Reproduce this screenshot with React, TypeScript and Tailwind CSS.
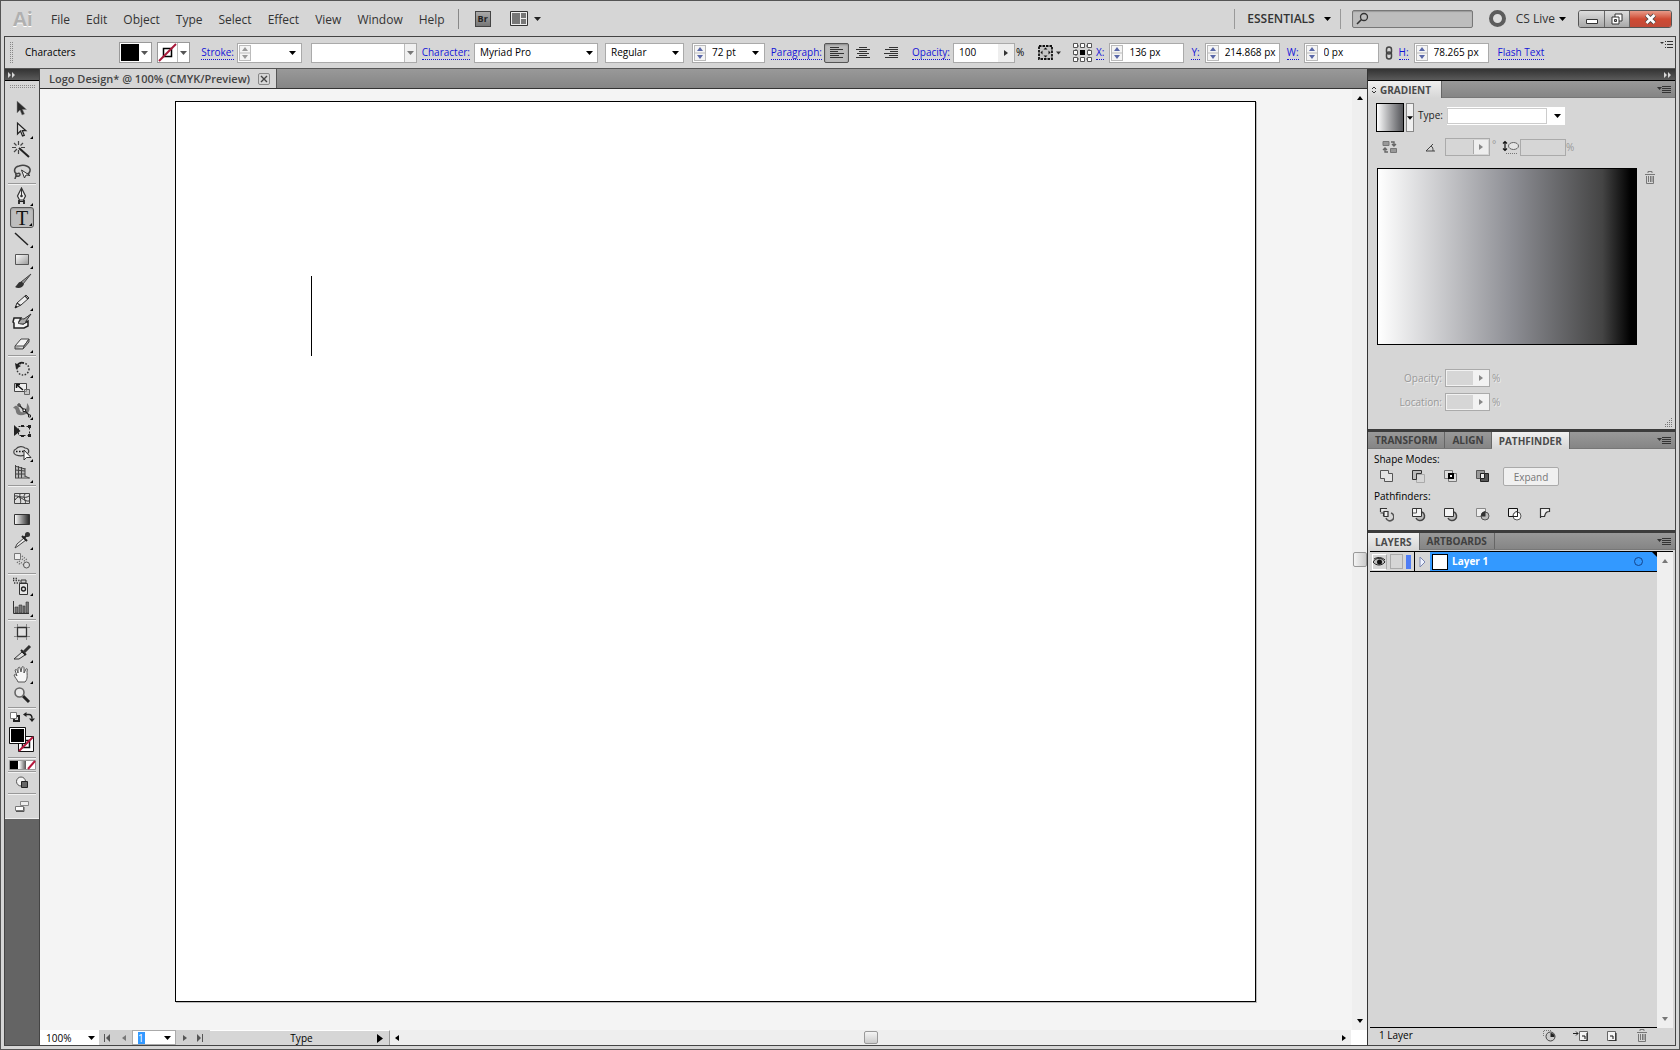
import type { ReactNode } from 'react'

const MENUS = ['File', 'Edit', 'Object', 'Type', 'Select', 'Effect', 'View', 'Window', 'Help']

type Tool = { name: string; icon: ReactNode; flyout?: boolean; active?: boolean }

function Svg({ w = 22, h = 20, children }: { w?: number; h?: number; children: ReactNode }) {
  return (
    <svg width={w} height={h} viewBox={`0 0 ${w} ${h}`} fill="none" className="shrink-0" aria-hidden="true">
      {children}
    </svg>
  )
}

const TOOL_GROUPS: Tool[][] = [
  [
    {
      name: 'Selection',
      icon: <Svg><path d="M6 2v12l3-3 2 5 2.500-1-2-4.500h4z" fill="#2b2b2b" stroke="#888" strokeWidth=".5" /></Svg>,
    },
    {
      name: 'Direct Selection',
      flyout: true,
      icon: <Svg><path d="M6.500 3v11l3-3 2 5 1.800-.7-2-4.600h3.600z" fill="#ddd" stroke="#222" strokeWidth="1.200" /></Svg>,
    },
    {
      name: 'Magic Wand',
      icon: (
        <Svg>
          <path d="M8 7l10 9" stroke="#222" strokeWidth="2" />
          <path d="M7.500 0v4M7.500 9v4M1 6.500h4M10 6.500h4M3 2l2.500 2.500M12 2L9.500 4.500M3 11l3-3" stroke="#444" strokeWidth="1.200" />
        </Svg>
      ),
    },
    {
      name: 'Lasso',
      icon: (
        <Svg>
          <path d="M6 12C2 10 3 5 8 4c6-2 12 1 11 5-.5 2-2 3-3 3M6 12c3-2 4 1 2 2s-4-1-3-3M5 13c0 2-1 3-1 4" stroke="#444" strokeWidth="1.500" />
          <path d="M10.500 8l3 8 1.500-3 4 .5z" fill="#eee" stroke="#333" />
        </Svg>
      ),
    },
  ],
  [
    {
      name: 'Pen',
      flyout: true,
      icon: (
        <Svg>
          <path d="M10.500 1l-4 8 2 4h4l2-4z" fill="#eee" stroke="#333" strokeWidth="1.200" />
          <path d="M10.500 2v6" stroke="#333" />
          <path d="M8 13v4M13 13v4" stroke="#222" strokeWidth="1.800" />
          <path d="M8 14.500h5" stroke="#222" />
          <circle cx="10.500" cy="9" r="1.300" fill="#333" />
        </Svg>
      ),
    },
    { name: 'Type', flyout: true, active: true, icon: <span className="font-['Liberation_Serif',serif] text-[20px] leading-5 text-[#111]">T</span> },
    { name: 'Line Segment', flyout: true, icon: <Svg><path d="M4 4l13 12" stroke="#222" strokeWidth="1.500" /></Svg> },
    {
      name: 'Rectangle',
      flyout: true,
      icon: (
        <Svg>
          <defs>
            <linearGradient id="rect" x1="0" y1="0" x2="1" y2="1">
              <stop stopColor="#fff" />
              <stop offset="1" stopColor="#999" />
            </linearGradient>
          </defs>
          <path d="M4.500 4.500h13v10h-13z" fill="url(#rect)" stroke="#555" />
        </Svg>
      ),
    },
    {
      name: 'Paintbrush',
      icon: (
        <Svg>
          <path d="M20 3L10 11l2 2z" fill="#999" stroke="#444" />
          <path d="M11 11c-4-1-4 3-7 5 3 2 8 1 9-3z" fill="#333" />
        </Svg>
      ),
    },
    {
      name: 'Pencil',
      flyout: true,
      icon: (
        <Svg>
          <path d="M15 3l3 3-8 7-6 3 2-5z" fill="#eee" stroke="#333" />
          <path d="M6 11l3.500 2.500M14 4l3 3" stroke="#333" strokeWidth="1.200" />
          <path d="M4 16l2.500-1L5 13.500z" fill="#111" />
        </Svg>
      ),
    },
    {
      name: 'Blob Brush',
      icon: (
        <Svg>
          <path d="M3 5h7L8 9l4 2 5-3v5l-4 2H3v-5L2 9z" fill="#f4f4f4" stroke="#222" strokeWidth="1.500" />
          <path d="M20 1l-7 5c-4-1-4 3-6 4 4 2 8 1 8-2z" fill="#aaa" stroke="#333" />
        </Svg>
      ),
    },
    {
      name: 'Eraser',
      flyout: true,
      icon: (
        <Svg>
          <path d="M4 12l6-7h8l-5 7z" fill="#f2f2f2" stroke="#444" />
          <path d="M4 12v3h8l1-3 5-7v3l-6 7" fill="#aaa" stroke="#444" />
        </Svg>
      ),
    },
  ],
  [
    {
      name: 'Rotate',
      flyout: true,
      icon: (
        <Svg>
          <circle cx="12" cy="10" r="6" stroke="#333" strokeWidth="1.500" strokeDasharray="1.500 1.500" />
          <path d="M6 7a6 6 0 017-3" stroke="#222" strokeWidth="1.600" />
          <path d="M4 4l1 6 5-3z" fill="#222" />
        </Svg>
      ),
    },
    {
      name: 'Scale',
      flyout: true,
      icon: (
        <Svg>
          <path d="M3.500 3.500h12v8h-12z" fill="#eee" stroke="#444" />
          <path d="M13.500 9.500h5v5h-5z" fill="#bbb" fillOpacity=".6" stroke="#666" />
          <path d="M12 10L6 5M5.500 8V4.500H9" stroke="#111" strokeWidth="1.500" />
        </Svg>
      ),
    },
    {
      name: 'Width',
      flyout: true,
      icon: (
        <Svg>
          <path d="M2 7c3-4 5-2 6 0s1 5 4 4 4-4 4-9c4 5 3 9-1 11s-9 2-10-2c0-2-1-4-3-4z" fill="#777" />
          <path d="M8 4l11 11" stroke="#222" strokeWidth="1.300" />
          <path d="M7 3h2v2H7zM12 8h2.500v2.500H12zM17.500 14h2v2h-2z" fill="#fff" stroke="#222" />
        </Svg>
      ),
    },
    {
      name: 'Free Transform',
      icon: (
        <Svg>
          <path d="M7.500 4.500h11v9h-11z" stroke="#222" strokeDasharray="2 2" />
          <path d="M3 3v11l6.500-5z" fill="#222" />
          <path d="M17 3h3v3h-3zM17 12h3v3h-3zM10 3h3v2h-3zM10 13h3v2h-3z" fill="#222" />
        </Svg>
      ),
    },
    {
      name: 'Shape Builder',
      flyout: true,
      icon: (
        <Svg>
          <path d="M5 12c-3-1-3-5 0-6 2-3 7-3 9-1 4 0 5 4 2 6-3 2-8 2-11 1z" fill="#d8d8d8" stroke="#444" strokeWidth="1.200" />
          <path d="M5 8.500h8" stroke="#111" strokeWidth="1.500" strokeDasharray="1.500 1.500" />
          <path d="M13 7v10l2.500-2.500H20z" fill="#fff" stroke="#333" />
        </Svg>
      ),
    },
    {
      name: 'Perspective Grid',
      flyout: true,
      icon: (
        <Svg>
          <path d="M4 2l10 3v8H4z" fill="#bbb" />
          <path d="M4.500 1v13M7.500 2v12M10.500 3v11M14 4v9M4 2l10 3M4 6l10 1M4 10h10M4 14h15M14 12l4 2" stroke="#444" />
        </Svg>
      ),
    },
  ],
  [
    {
      name: 'Mesh',
      icon: (
        <Svg>
          <path d="M3.500 4.500h15v10h-15z" fill="#ddd" stroke="#444" />
          <path d="M9 5c-1 4 2 6 0 10M14 5c-3 4 2 6 0 10M4 11c4-7 9 0 14-4M4 7c5-1 9 6 14 5" stroke="#333" />
        </Svg>
      ),
    },
    {
      name: 'Gradient',
      icon: (
        <Svg>
          <defs>
            <linearGradient id="ramp">
              <stop stopColor="#fff" />
              <stop offset="1" stopColor="#222" />
            </linearGradient>
          </defs>
          <path d="M3.500 4.500h15v10h-15z" fill="url(#ramp)" stroke="#333" />
        </Svg>
      ),
    },
    {
      name: 'Eyedropper',
      flyout: true,
      icon: (
        <Svg>
          <path d="M13 7l-7 6-2 4 3-2 8-6" fill="#eee" stroke="#444" />
          <path d="M11 5l5 5M13 7l4-4" stroke="#222" strokeWidth="2" />
          <circle cx="16.500" cy="3.500" r="2.500" fill="#333" />
        </Svg>
      ),
    },
    {
      name: 'Blend',
      icon: (
        <Svg>
          <path d="M3.500 1.500h6v6h-6z" fill="#eee" stroke="#777" />
          <path d="M6 10l4 3M8 9l5 4M11 7l4 3M11 4l5 4" stroke="#666" strokeWidth="1.500" strokeDasharray="1 1.500" />
          <circle cx="15.500" cy="13" r="3" fill="#ddd" stroke="#555" />
        </Svg>
      ),
    },
  ],
  [
    {
      name: 'Symbol Sprayer',
      flyout: true,
      icon: (
        <Svg>
          <path d="M2 3.500h7M3 6h6M2 1.500h5" stroke="#333" strokeWidth="1.300" strokeDasharray="1.300 1.300" />
          <path d="M10 3h5v3h-5z" fill="#ccc" stroke="#333" />
          <path d="M8.500 6.500h8v11h-8z" fill="#e6e6e6" stroke="#333" />
          <circle cx="12.500" cy="12" r="2" stroke="#222" strokeWidth="1.300" />
        </Svg>
      ),
    },
    {
      name: 'Column Graph',
      flyout: true,
      icon: (
        <Svg>
          <path d="M2.500 3v12.500H18" stroke="#333" />
          <path d="M4 9h3v6H4zM8 7h3v8H8zM12 8h2v7h-2zM15 4h2.500v11H15z" fill="#777" stroke="#333" strokeWidth=".6" />
        </Svg>
      ),
    },
  ],
  [
    {
      name: 'Artboard',
      icon: (
        <Svg>
          <path d="M6.500 4.500h9v9h-9z" fill="#e2e2e2" stroke="#333" strokeWidth="1.300" />
          <path d="M6.500 1v3M15.500 1v3M6.500 14v3M15.500 14v3M3 4.500h3M16 4.500h3M3 13.500h3M16 13.500h3" stroke="#888" />
        </Svg>
      ),
    },
    {
      name: 'Slice',
      flyout: true,
      icon: (
        <Svg>
          <path d="M11 8l-8 7h5l6-4z" fill="#ddd" stroke="#333" />
          <path d="M10 6l5 5" stroke="#222" strokeWidth="2" />
          <path d="M13 8l6-6" stroke="#333" strokeWidth="3" />
        </Svg>
      ),
    },
    {
      name: 'Hand',
      flyout: true,
      icon: (
        <Svg>
          <path
            d="M7 17c-1-3-3-4-4-7 1-1 2 0 3 1L4 5c1-1 2-1 3 3V3c1-1 2-1 2 0l1 4 1-5c1-1 2 0 2 1v5l2-4c1-1 2 0 1 2 0 4 1 8-2 11z"
            fill="#f6f6f6"
            stroke="#555"
          />
        </Svg>
      ),
    },
    {
      name: 'Zoom',
      icon: (
        <Svg>
          <path d="M12 10l6 6" stroke="#222" strokeWidth="3" />
          <circle cx="8.500" cy="6.500" r="4.500" fill="#e8e8e8" stroke="#666" strokeWidth="1.600" />
        </Svg>
      ),
    },
  ],
]

function Caret({ className = 'text-black' }: { className?: string }) {
  return (
    <svg width="7" height="4" viewBox="0 0 7 4" className={`shrink-0 ${className}`} aria-hidden="true">
      <path d="M0 0h7L3.500 4z" fill="currentColor" />
    </svg>
  )
}

function Arrow({ d, className = 'text-black' }: { d: 'up' | 'down' | 'left' | 'right'; className?: string }) {
  const path = { up: 'M4 2l3 4H1z', down: 'M1 2h6L4 6z', left: 'M6 1v6L2 4z', right: 'M2 1v6l4-3z' }[d]
  return (
    <svg width="8" height="8" viewBox="0 0 8 8" className={`shrink-0 ${className}`} aria-hidden="true">
      <path d={path} fill="currentColor" />
    </svg>
  )
}

function Chevrons() {
  return (
    <svg width="8" height="6" viewBox="0 0 8 6" aria-hidden="true">
      <path d="M0 0v6l3-3zM4 0v6l3-3z" fill="#d6d6d6" />
    </svg>
  )
}

function PanelMenu() {
  return (
    <button aria-label="Panel menu" className="mr-1 ml-auto flex items-center">
      <Svg w={14} h={9}>
        <path d="M0 2h5L2.500 5z" fill="#333" />
        <path d="M5 1.500h9M5 3.500h9M5 5.500h9M5 7.500h9" stroke="#333" />
      </Svg>
    </button>
  )
}

function Spinner({ muted }: { muted?: boolean }) {
  return (
    <span className={`m-px flex w-3 shrink-0 items-center justify-center border border-[#bbb] bg-[#f4f4f4] ${muted ? 'text-[#999]' : 'text-[#5a68a8]'}`}>
      <Svg w={10} h={14}>
        <path d="M5 1l3 4H2zM5 13l3-4H2z" fill="currentColor" />
        <path d="M0 7h10" stroke="#bbb" />
      </Svg>
    </span>
  )
}

function Link({ children }: { children: ReactNode }) {
  return (
    <a href="#" className="shrink-0 border-b border-dotted border-[#1414d8] leading-[14px] text-[#1414d8]">
      {children}
    </a>
  )
}

function NumberBox({ label, value }: { label: string; value: string }) {
  return (
    <>
      <Link>{label}:</Link>
      <span className="ml-[5px] flex h-5 w-[75px] shrink-0 border border-[#aaa] bg-white">
        <Spinner />
        <input aria-label={label} defaultValue={value} className="w-full min-w-0 bg-transparent pl-[5px] outline-none" />
      </span>
    </>
  )
}

function Picker({ label, value, className }: { label: string; value: string; className: string }) {
  return (
    <span className={`relative flex h-5 shrink-0 items-center border border-[#aaa] bg-white ${className}`}>
      <select aria-label={label} className="h-full w-full appearance-none bg-transparent pl-[5px] outline-none">
        <option>{value}</option>
      </select>
      <span className="pointer-events-none absolute right-1">
        <Caret />
      </span>
    </span>
  )
}

function AlignIcon({ side }: { side: 'left' | 'center' | 'right' }) {
  const d = {
    left: 'M0 .5h9M0 2.500h13M0 4.500h8M0 6.500h14M0 8.500h9M0 10.500h13',
    center: 'M3 .5h8M0 2.500h14M3 4.500h8M1 6.500h12M3 8.500h8M0 10.500h14',
    right: 'M5 .5h9M1 2.500h13M6 4.500h8M0 6.500h14M5 8.500h9M1 10.500h13',
  }[side]
  return (
    <Svg w={14} h={11}>
      <path d={d} stroke="#333" />
    </Svg>
  )
}

function MenuBar() {
  return (
    <header className="flex h-[35px] shrink-0 items-center pr-1 pl-[9px] text-[12px] text-[#333]">
      <span className="w-[38px] text-[20px] leading-6 font-bold text-[#b0b0b0] [text-shadow:0_1px_0_#fff]">Ai</span>
      <nav className="flex gap-4 pt-[2px]">
        {MENUS.map((m) => (
          <button key={m}>{m}</button>
        ))}
      </nav>
      <span className="mr-4 ml-[13px] h-5 w-px bg-[#888]" />
      <button className="h-4 w-4 border border-[#444] bg-linear-to-b from-[#aaa] to-[#777] text-[9px] leading-[13px] font-bold text-[#222]">Br</button>
      <button aria-label="Arrange documents" className="ml-[19px] flex items-center gap-[6px]">
        <Svg w={18} h={15}>
          <path d="M.5.5h17v14H.5z" fill="#eee" stroke="#333" />
          <path d="M2 2h8v11H2zM11 2h5v5h-5zM11 8h5v5h-5z" fill="#777" />
        </Svg>
        <Caret className="text-[#222]" />
      </button>
      <div className="ml-auto flex items-center">
        <span className="h-5 w-px bg-[#999]" />
        <button className="ml-3 flex items-center gap-[9px] text-[12px] font-semibold">
          ESSENTIALS <Caret />
        </button>
        <span className="mr-[11px] ml-[9px] h-5 w-px bg-[#999]" />
        <label className="flex h-[18px] w-[121px] items-center rounded-xs border border-[#777] bg-[#bdbdbd] pl-[3px] shadow-[inset_0_1px_1px_#999]">
          <Svg w={13} h={13}>
            <circle cx="8" cy="5" r="3.500" stroke="#333" strokeWidth="1.300" />
            <path d="M5.500 7.500L1 12" stroke="#333" strokeWidth="1.600" />
          </Svg>
          <input aria-label="Search" className="w-full min-w-0 bg-transparent outline-none" />
        </label>
        <span className="mr-[10px] ml-4 h-[17px] w-[17px] rounded-full border-4 border-[#5c5c5c] bg-[#ddd]" />
        <button className="mr-3 flex items-center gap-1">
          CS Live <Caret />
        </button>
        <div className="flex h-[18px] overflow-hidden rounded-[3px] border border-[#555]">
          <button aria-label="Minimize" className="flex w-[25px] items-center justify-center bg-linear-to-b from-[#ddd] to-[#a8a8a8]">
            <Svg w={12} h={12}><path d="M.5 6.500h11v4H.5z" fill="#fff" stroke="#333" /></Svg>
          </button>
          <button aria-label="Restore" className="flex w-[25px] items-center justify-center border-l border-[#666] bg-linear-to-b from-[#ddd] to-[#a8a8a8]">
            <Svg w={12} h={12}>
              <path d="M4 1h7v7H4z" fill="#fff" stroke="#333" />
              <path d="M1 4h7v7H1z" fill="#fff" stroke="#333" />
              <path d="M3.500 6.500h2v2h-2z" fill="#aaa" stroke="#333" />
            </Svg>
          </button>
          <button aria-label="Close" className="flex w-[42px] items-center justify-center border-l border-[#666] bg-linear-to-b from-[#e79a88] via-[#cf4a33] to-[#c04a38]">
            <Svg w={13} h={12}>
              <path d="M2.500 2l8 8M10.500 2l-8 8" stroke="#444" strokeWidth="4.500" />
              <path d="M2.500 2l8 8M10.500 2l-8 8" stroke="#fff" strokeWidth="2.800" />
            </Svg>
          </button>
        </div>
      </div>
    </header>
  )
}

function ControlBar() {
  return (
    <div className="flex h-8 shrink-0 items-center border-b border-[#555] pl-[5px] text-[10px] whitespace-nowrap text-black">
      <Svg w={3} h={21}><path d="M.5 0v21M2.500 0v21" stroke="#888" strokeDasharray="1 1" /></Svg>
      <span className="ml-3 w-[94px]">Characters</span>
      <button aria-label="Fill" className="flex h-[21px] w-[33px] border border-[#999] bg-white p-px">
        <span className="h-full w-[18px] bg-black" />
        <span className="flex flex-1 items-center justify-center"><Caret className="text-[#555]" /></span>
      </button>
      <button aria-label="Stroke color" className="ml-[5px] flex h-[21px] w-[33px] border border-[#999] bg-white">
        <Svg w={19} h={19}>
          <path d="M5.500 5.500h8v8h-8z" stroke="#000" strokeWidth="1.500" />
          <path d="M1 18L18 1" stroke="#a8193a" strokeWidth="2" />
        </Svg>
        <span className="flex h-full flex-1 items-center justify-center border-l border-[#bbb]"><Caret className="text-[#555]" /></span>
      </button>
      <span className="flex w-[47px] justify-end pr-[3px]"><Link>Stroke:</Link></span>
      <span className="flex h-5 w-[65px] border border-[#aaa] bg-white">
        <Spinner muted />
        <input aria-label="Stroke" className="w-full min-w-0 bg-transparent outline-none" />
        <span className="flex w-3 shrink-0 items-center pr-1"><Caret /></span>
      </span>
      <span className="ml-[9px] flex h-5 w-[106px] border border-[#aaa] bg-white">
        <input aria-label="Brush" className="w-full min-w-0 bg-transparent outline-none" />
        <span className="flex w-3 shrink-0 items-center justify-center border-l border-[#bbb] bg-[#f0f0f0]"><Caret className="text-[#777]" /></span>
      </span>
      <span className="flex w-[57px] justify-end pr-1"><Link>Character:</Link></span>
      <Picker label="Font family" value="Myriad Pro" className="w-[124px]" />
      <Picker label="Font style" value="Regular" className="ml-[7px] w-[79px]" />
      <span className="ml-2 flex h-5 w-[73px] border border-[#aaa] bg-white">
        <Spinner />
        <input aria-label="Font size" defaultValue="72 pt" className="w-full min-w-0 bg-transparent pl-[5px] outline-none" />
        <span className="flex w-3 shrink-0 items-center pr-1"><Caret /></span>
      </span>
      <span className="flex w-[59px] justify-end pr-[2px]"><Link>Paragraph:</Link></span>
      <button aria-label="Align left" className="flex h-5 w-[25px] items-center justify-center rounded-xs border border-[#555] bg-[#bcbcbc] shadow-[inset_0_1px_2px_#888]"><AlignIcon side="left" /></button>
      <button aria-label="Align center" className="flex w-7 justify-center"><AlignIcon side="center" /></button>
      <button aria-label="Align right" className="flex w-7 justify-center"><AlignIcon side="right" /></button>
      <span className="flex w-12 justify-end pr-[3px]"><Link>Opacity:</Link></span>
      <span className="flex h-5 w-[62px] border border-[#aaa] bg-white">
        <input aria-label="Opacity" defaultValue="100" className="w-full min-w-0 bg-transparent pl-[5px] outline-none" />
        <span className="flex w-4 shrink-0 items-center justify-center bg-[#eee]"><Arrow d="right" className="text-[#333]" /></span>
      </span>
      <span className="w-[23px] pl-px">%</span>
      <button aria-label="Recolor" className="flex items-center gap-[3px]">
        <Svg w={15} h={15}>
          <path d="M1 1h13v13H1z" fill="#c4c4c4" stroke="#111" strokeWidth="1.800" strokeDasharray="2.500 1" />
          <path d="M7.500 2.500l2 2h-4zM7.500 12.500l2-2h-4zM2.500 7.500l2-2v4zM12.500 7.500l-2-2v4z" fill="#111" />
        </Svg>
        <Caret className="w-[5px] text-[#333]" />
      </button>
      <button aria-label="Reference point" className="mr-1 ml-3">
        <Svg w={19} h={19}>
          <path d="M3 3h13v13H3z" stroke="#555" strokeDasharray="1 1" />
          <path d="M.5.5h4v4h-4zM7.500.5h4v4h-4zM14.500.5h4v4h-4zM.5 7.500h4v4h-4zM14.500 7.500h4v4h-4zM.5 14.500h4v4h-4zM7.500 14.500h4v4h-4zM14.500 14.500h4v4h-4z" fill="#fff" stroke="#555" />
          <path d="M7 7h5v5H7z" fill="#000" />
        </Svg>
      </button>
      <NumberBox label="X" value="136 px" />
      <span className="w-[7px]" />
      <NumberBox label="Y" value="214.868 px" />
      <span className="w-[7px]" />
      <NumberBox label="W" value="0 px" />
      <button aria-label="Constrain proportions" className="mx-[6px]">
        <Svg w={8} h={14}>
          <rect x="1.500" y="1" width="5" height="7" rx="2.500" stroke="#444" strokeWidth="1.500" />
          <rect x="1.500" y="6" width="5" height="7" rx="2.500" stroke="#444" strokeWidth="1.500" />
        </Svg>
      </button>
      <NumberBox label="H" value="78.265 px" />
      <span className="w-[9px]" />
      <Link>Flash Text</Link>
      <button aria-label="Control menu" className="mr-[2px] mb-4 ml-auto">
        <Svg w={13} h={9}>
          <path d="M0 2h4L2 4z" fill="#333" />
          <path d="M5 1.500h1M7 1.500h6M5 4.500h1M7 4.500h6M5 7.500h1M7 7.500h6" stroke="#333" />
        </Svg>
      </button>
    </div>
  )
}

function ToolSeparator() {
  return (
    <div className="flex h-1 items-center px-[3px]">
      <span className="h-[2px] w-full border-t border-[#999] bg-[#f2f2f2]" />
    </div>
  )
}

function Toolbar() {
  return (
    <aside className="w-[35px] shrink-0 border-r border-[#444] bg-[#646464]">
      <div className="flex h-3 items-center border-b border-black bg-linear-to-b from-[#333] to-[#5a5a5a] pl-[3px]"><Chevrons /></div>
      <div className="border-b border-[#eee] bg-[#d6d6d6]">
        <div className="flex h-[17px] justify-center pt-1">
          <Svg w={25} h={3}><path d="M0 .5h25M0 2.500h25" stroke="#888" strokeDasharray="1 1" /></Svg>
        </div>
        {TOOL_GROUPS.map((group, i) => (
          <div key={i}>
            {group.map((tool) => (
              <button
                key={tool.name}
                aria-label={tool.name}
                className={`relative mx-auto flex h-[21px] w-6 items-center justify-center ${tool.active ? 'rounded-[3px] border border-[#555] bg-[#bebebe] shadow-[inset_0_1px_2px_#999]' : ''}`}
              >
                {tool.icon}
                {tool.flyout && (
                  <svg width="3" height="3" viewBox="0 0 3 3" className="absolute right-px bottom-px" aria-hidden="true">
                    <path d="M3 0v3H0z" fill="#000" />
                  </svg>
                )}
              </button>
            ))}
            <ToolSeparator />
          </div>
        ))}
        <div className="flex h-[14px] items-center justify-between px-1">
          <Svg w={12} h={12}>
            <path d="M5 5h5v5H5z" stroke="#222" strokeWidth="2" />
            <path d="M1.500 1.500h6v6h-6z" fill="#fff" stroke="#777" />
          </Svg>
          <Svg w={12} h={12}>
            <path d="M2 3.500h4c2 0 3 1 3 4" stroke="#222" strokeWidth="1.500" />
            <path d="M0 3.500L3.500 1v5zM6 7.500h6l-3 3.500z" fill="#222" />
          </Svg>
        </div>
        <div className="flex justify-center pt-[3px]">
          <Svg w={26} h={26}>
            <path d="M9.500 9.500h15v15h-15z" fill="#fff" stroke="#111" />
            <path d="M13.500 13.500h7v7h-7z" stroke="#111" strokeWidth="1.500" />
            <path d="M10 24L24 10" stroke="#b5173c" strokeWidth="2" />
            <path d="M.5.5h16v16H.5z" fill="#fff" stroke="#111" />
            <path d="M2 2h13v13H2z" fill="#000" />
          </Svg>
        </div>
        <div className="pt-[3px]"><ToolSeparator /></div>
        <div className="flex justify-center">
          <Svg w={27} h={10}>
            <defs>
              <linearGradient id="mini">
                <stop stopColor="#fff" />
                <stop offset="1" stopColor="#555" />
              </linearGradient>
            </defs>
            <path d="M.5.5h26v9H.5z" fill="#fff" stroke="#999" />
            <path d="M1 1h8v8H1z" fill="#000" />
            <path d="M10 1h7v8h-7z" fill="url(#mini)" />
            <path d="M19 9l7-8" stroke="#b5173c" strokeWidth="2" />
          </Svg>
        </div>
        <ToolSeparator />
        <button aria-label="Drawing mode" className="mx-auto flex h-[18px] items-center">
          <Svg w={14} h={14}>
            <circle cx="6" cy="5.500" r="4.500" fill="#f4f4f4" stroke="#555" />
            <path d="M6.500 5.500h6v6h-6z" fill="#666" stroke="#222" />
          </Svg>
        </button>
        <ToolSeparator />
        <button aria-label="Screen mode" className="mx-auto flex h-[22px] items-center">
          <Svg w={18} h={14}>
            <path d="M7.500 1.500h8v4h-8z" fill="#eee" stroke="#888" />
            <path d="M2.500 6.500h8v4h-8z" fill="#fff" stroke="#777" />
            <path d="M3 11.500h8V7" stroke="#555" />
          </Svg>
        </button>
      </div>
    </aside>
  )
}

function StatusBar() {
  return (
    <div className="flex h-[15px] shrink-0 items-center bg-[#d0d0d0] text-[10px] leading-[14px] text-black">
      <span className="relative flex h-full w-[59px] items-center bg-white">
        <select aria-label="Zoom level" className="h-full w-full appearance-none bg-transparent pl-[6px] outline-none"><option>100%</option></select>
        <span className="pointer-events-none absolute right-1"><Caret /></span>
      </span>
      <button aria-label="First artboard" className="flex w-4 items-center justify-center">
        <Svg w={8} h={8}><path d="M1 0h1v8H1zM7 0v8L3 4z" fill="#555" /></Svg>
      </button>
      <button aria-label="Previous artboard" className="flex w-[17px] justify-center"><Arrow d="left" className="text-[#777]" /></button>
      <span className="relative flex h-full w-11 items-center border border-[#aaa] bg-white pl-[5px]">
        <input aria-label="Artboard number" defaultValue="1" className="h-3 w-[7px] bg-[#3399ff] leading-3 text-white outline-none" />
        <span className="absolute right-1"><Caret /></span>
      </span>
      <button aria-label="Next artboard" className="flex w-[18px] justify-center"><Arrow d="right" className="text-[#555]" /></button>
      <button aria-label="Last artboard" className="mr-1 flex w-3 justify-center">
        <Svg w={8} h={8}><path d="M1 0v8l4-4zM6 0h1v8H6z" fill="#555" /></Svg>
      </button>
      <button className="flex h-full w-[180px] items-center border-t border-r border-white border-r-[#999] bg-[#d6d6d6]">
        <span className="flex-1 pl-1 text-center">Type</span>
        <svg width="6" height="9" viewBox="0 0 6 9" className="-ml-3 mr-[6px]" aria-hidden="true"><path d="M0 0v9l6-4.500z" fill="#000" /></svg>
      </button>
      <div className="flex h-full flex-1 items-center justify-between bg-[#eee] px-[3px]">
        <Arrow d="left" />
        <span className="h-[13px] w-[14px] rounded-xs border border-[#999] bg-linear-to-b from-[#f4f4f4] to-[#ccc]" />
        <Arrow d="right" />
      </div>
      <span className="h-full w-4 bg-white" />
    </div>
  )
}

function DocumentArea() {
  return (
    <main className="flex min-w-0 flex-1 flex-col border-r border-[#333]">
      <div className="flex h-5 shrink-0 items-stretch border-b border-[#333] bg-linear-to-b from-[#999] to-[#858585]">
        <div className="flex items-center gap-2 border-r border-[#555] bg-[#d6d6d6] pt-px pr-[6px] pl-[9px] text-[11px] font-semibold text-[#444]">
          <span>Logo Design* @ 100% (CMYK/Preview)</span>
          <button aria-label="Close document" className="rounded-xs border border-[#888] p-px">
            <Svg w={8} h={8}><path d="M1 1l6 6M7 1L1 7" stroke="#444" strokeWidth="1.400" /></Svg>
          </button>
        </div>
      </div>
      <div className="flex min-h-0 flex-1">
        <div className="flex flex-1 bg-[#f4f4f4] pt-3 pr-24 pb-7 pl-[135px]">
          <div className="flex-1 border border-black bg-white pt-[174px] pl-[135px] shadow-[1px_1px_0_#bbb]">
            <div className="h-20 w-px bg-black" />
          </div>
        </div>
        <div className="flex w-[15px] flex-col items-center justify-between bg-[#efefef] py-[5px]">
          <Arrow d="up" />
          <span className="h-[15px] w-[14px] rounded-xs border border-[#999] bg-linear-to-r from-[#f4f4f4] to-[#ccc]" />
          <Arrow d="down" />
        </div>
      </div>
      <StatusBar />
    </main>
  )
}

function PanelTabs({ tabs, active }: { tabs: string[]; active: string }) {
  return (
    <div className="flex h-[17px] shrink-0 items-stretch border-b border-[#777] bg-linear-to-b from-[#999] to-[#858585] text-[10px] leading-4 font-bold">
      {tabs.map((tab) => (
        <button
          key={tab}
          className={`border-r border-[#666] px-[7px] ${tab === active ? '-mb-px bg-linear-to-b from-[#f0f0f0] to-[#d6d6d6] text-[#4a4a4a]' : 'text-[#404040]'}`}
        >
          {tab}
        </button>
      ))}
      <PanelMenu />
    </div>
  )
}

function DisabledField({ label }: { label: string }) {
  return (
    <label className="flex items-center [text-shadow:1px_1px_0_#eee]">
      <span className="w-[70px] pr-[3px] text-right">{label}:</span>
      <span className="flex h-[18px] w-[45px] border border-[#aaa] bg-[#f2f2f2] p-px">
        <input disabled className="w-[26px] bg-[#d6d6d6]" />
        <span className="flex flex-1 items-center justify-center"><Arrow d="right" className="text-[#888]" /></span>
      </span>
      <span className="ml-[2px]">%</span>
    </label>
  )
}

function Trash() {
  return (
    <Svg w={10} h={13}>
      <path d="M0 3.500h10M3 2V.5h4V2M1.500 5v7.500h7V5M3.500 5v6M5.500 5v6M7 5v6" stroke="#777" />
    </Svg>
  )
}

function GradientPanel() {
  return (
    <section className="flex h-[348px] shrink-0 flex-col text-[10px]">
      <div className="flex h-[17px] shrink-0 border-b border-[#777] bg-linear-to-b from-[#999] to-[#858585]">
        <button className="-mb-px flex items-center gap-[3px] border-r border-[#666] bg-linear-to-b from-[#f0f0f0] to-[#d6d6d6] pr-[10px] pl-[3px] leading-4 font-bold text-[#4a4a4a]">
          <Svg w={6} h={8}><path d="M1 3l2-2 2 2M1 5l2 2 2-2" stroke="#333" /></Svg>
          GRADIENT
        </button>
        <PanelMenu />
      </div>
      <div className="flex pt-[5px] pl-2">
        <button aria-label="Gradient swatch" className="h-[29px] w-7 border border-black bg-linear-to-r from-white to-[#55565a]" />
        <button aria-label="Gradient presets" className="ml-[2px] flex h-[29px] w-2 items-center justify-center border border-[#888] bg-[#f0f0f0]"><Caret className="w-[6px]" /></button>
        <label htmlFor="gradient-type" className="w-[33px] pt-[5px] pl-1 text-[#222]">Type:</label>
        <span className="relative mt-1 flex h-[18px] w-[118px] items-center bg-white">
          <select id="gradient-type" className="h-4 w-[100px] appearance-none border border-[#ccc] outline-none"><option></option></select>
          <span className="pointer-events-none absolute right-1"><Caret /></span>
        </span>
      </div>
      <div className="flex h-6 items-center pt-[6px] pl-[14px] text-[#999]">
        <button aria-label="Reverse gradient" className="mr-7">
          <Svg w={15} h={14}>
            <path d="M1 1.500h6v4H1zM8.500 8.500h6v4h-6z" fill="#999" stroke="#777" />
            <path d="M9 2h3v4M10 4l2 2 2-2M6 12H3V8M1 10l2-2 2 2" stroke="#666" strokeWidth="1.400" />
          </Svg>
        </button>
        <Svg w={11} h={9}><path d="M10 8H1L8 1M6 3c2 1 2 3 2 5" stroke="#444" /></Svg>
        <span className="ml-[9px] flex h-[18px] w-[45px] border border-[#aaa] p-px">
          <input aria-label="Angle" disabled className="w-[26px]" />
          <span className="flex flex-1 items-center justify-center border-l border-[#aaa] bg-[#eee]"><Arrow d="right" className="text-[#888]" /></span>
        </span>
        <span className="w-3 self-start pl-[2px] leading-3">°</span>
        <Svg w={17} h={15}>
          <path d="M3 2v8M1 3.500L3 1.500l2 2M1 8.500l2 2 2-2" stroke="#111" strokeWidth="1.200" />
          <ellipse cx="11.500" cy="6" rx="5" ry="3.500" fill="#e4e4e4" stroke="#666" />
          <path d="M4 13.500h12" stroke="#777" strokeDasharray="1 1" />
        </Svg>
        <input aria-label="Aspect ratio" disabled className="ml-px h-[17px] w-[46px] border border-[#aaa]" />
        <span>%</span>
      </div>
      <div className="flex gap-2 pt-3 pl-[9px]">
        <div className="h-[177px] w-[260px] border border-black bg-[linear-gradient(to_right,#fff,#8d8e94_52%,#444_87%,#000_98%)]" />
        <button aria-label="Delete stop" className="h-4 pt-[3px]"><Trash /></button>
      </div>
      <div className="flex flex-col gap-[6px] pt-6 pl-[7px] text-[#999]">
        <DisabledField label="Opacity" />
        <DisabledField label="Location" />
      </div>
      <div className="mt-auto mr-[3px] mb-[2px] self-end">
        <Svg w={9} h={9}><path d="M8.500 0v9M6.500 2v7M4.500 4v5M2.500 6v3" stroke="#777" strokeDasharray="1 1" /></Svg>
      </div>
    </section>
  )
}

const SHAPE_MODES = [
  { name: 'Unite', icon: <path d="M1.500 1.500h8v3h4v8h-8v-3h-4z" fill="#e4e4e4" stroke="#555" /> },
  {
    name: 'Minus Front',
    icon: <><path d="M5.500 5.500h8v8h-8z" stroke="#aaa" /><path d="M1.500 1.500h9v3h-5v6h-4z" fill="#bbb" stroke="#333" /></>,
  },
  {
    name: 'Intersect',
    icon: <><path d="M1.500 1.500h8v8h-8zM5.500 4.500h8v8h-8z" fill="#ddd" stroke="#777" /><path d="M6 5h4v4H6z" fill="#fff" stroke="#000" strokeWidth="2" /></>,
  },
  {
    name: 'Exclude',
    icon: <><path d="M1.500 1.500h8v8h-8z" fill="#999" stroke="#555" /><path d="M5.500 4.500h8v8h-8z" fill="#555" stroke="#222" /><path d="M5.500 4.500h4v5h-4z" fill="#eee" stroke="#222" /></>,
  },
]

const PATHFINDERS = [
  {
    name: 'Divide',
    icon: <><path d="M1.500 5V1.500H8M5 4.500h4v5H5zM1.500 6h3v3" fill="#eee" stroke="#333" strokeWidth="1.200" /><path d="M12 6a4 4 0 11-5 5" stroke="#555" strokeWidth="1.600" /></>,
  },
  {
    name: 'Trim',
    icon: <><path d="M11 5a4.500 4.500 0 11-6 6" fill="#bbb" stroke="#444" strokeWidth="1.500" /><path d="M1.500 1.500h9v8h-9z" fill="#f4f4f4" stroke="#333" /><path d="M5.500 2v4H2" stroke="#555" /></>,
  },
  {
    name: 'Merge',
    icon: <><path d="M11 5a4.500 4.500 0 11-6 6" fill="#bbb" stroke="#444" strokeWidth="1.500" /><path d="M1.500 1.500h9v8h-9z" fill="#f4f4f4" stroke="#333" /></>,
  },
  {
    name: 'Crop',
    icon: <><path d="M1.500 1.500h9v8h-9z" fill="#eee" stroke="#888" /><circle cx="10" cy="9" r="4" fill="#bbb" stroke="#555" /><path d="M10.500 4v5.500H6A5 5 0 0110.500 4z" fill="#333" /></>,
  },
  {
    name: 'Outline',
    icon: <><circle cx="10" cy="9" r="4" fill="#fff" stroke="#555" /><path d="M1.500 1.500h9v8h-9z" fill="#eee" stroke="#111" /><path d="M6 9.500c0-3 2-5 4.500-5v5z" fill="#fff" stroke="#222" /></>,
  },
  { name: 'Minus Back', icon: <path d="M1.500 11V1.500h9v3c-3 0-4 1-5 5h-4" fill="#eee" stroke="#333" strokeWidth="1.200" /> },
]

function PathfinderPanel() {
  return (
    <section className="shrink-0 border-t-[3px] border-[#3c3c3c] text-[10px]">
      <PanelTabs tabs={['TRANSFORM', 'ALIGN', 'PATHFINDER']} active="PATHFINDER" />
      <div className="h-[81px] pt-[3px] pl-[6px] text-black">
        <h3>Shape Modes:</h3>
        <div className="flex items-center gap-[17px] pl-[5px]">
          {SHAPE_MODES.map((m) => (
            <button key={m.name} aria-label={m.name}><Svg w={15} h={15}>{m.icon}</Svg></button>
          ))}
          <button disabled className="-ml-1 h-[19px] w-14 rounded-xs border border-[#aaa] bg-[#f0f0f0] leading-4 text-[#777]">Expand</button>
        </div>
        <h3 className="pt-[3px]">Pathfinders:</h3>
        <div className="flex items-center gap-[17px] pt-[3px] pl-[5px]">
          {PATHFINDERS.map((m) => (
            <button key={m.name} aria-label={m.name}><Svg w={15} h={15}>{m.icon}</Svg></button>
          ))}
        </div>
      </div>
    </section>
  )
}

function LayersPanel() {
  return (
    <section className="flex min-h-0 flex-1 flex-col border-t-[3px] border-[#3c3c3c] text-[10px]">
      <PanelTabs tabs={['LAYERS', 'ARTBOARDS']} active="LAYERS" />
      <div className="mx-[2px] mt-px flex flex-1 border-t border-black">
        <div className="flex-1 border-b border-black">
          <div className="flex h-5 items-center border-b border-black">
            <button aria-label="Toggle visibility" className="ml-[2px] flex h-4 w-[15px] items-center border border-white border-r-[#aaa]">
              <Svg w={13} h={10}>
                <path d="M0 5c3-5 9-5 12 0-3 4-9 4-12 0z" fill="#bbb" stroke="#222" />
                <circle cx="6.500" cy="5" r="2.500" fill="#111" />
                <path d="M1 2c3-2 8-2 11 1" stroke="#222" />
              </Svg>
            </button>
            <button aria-label="Toggle lock" className="ml-[3px] h-[15px] w-[13px] border border-[#aaa]" />
            <span className="mx-[3px] h-[14px] w-[5px] bg-[#4f7df5]" />
            <button aria-label="Expand layer" className="flex h-full w-4 items-center justify-center border-l border-black">
              <Svg w={7} h={12}><path d="M1 1v10l5-5z" fill="#eef3ff" stroke="#7a86b0" /></Svg>
            </button>
            <div className="relative flex h-full flex-1 items-center bg-[#3399ff]">
              <span className="ml-[2px] h-4 w-4 border border-black bg-white" />
              <span className="ml-1 font-bold text-white">Layer 1</span>
              <span className="mr-[14px] ml-auto h-[9px] w-[9px] rounded-full border border-[#14448c]" />
              <svg width="5" height="5" viewBox="0 0 5 5" className="absolute top-0 right-0" aria-hidden="true"><path d="M0 0h5v5z" fill="#000" /></svg>
            </div>
          </div>
        </div>
        <div className="flex w-4 flex-col items-center justify-between bg-[#efefef] py-[5px]">
          <Arrow d="up" className="text-[#777]" />
          <Arrow d="down" className="text-[#777]" />
        </div>
      </div>
      <footer className="flex h-[17px] shrink-0 items-center pb-[2px] pl-[11px] text-black">
        1 Layer
        <div className="mr-7 ml-auto flex items-center gap-[17px]">
          <button aria-label="Make clipping mask">
            <Svg w={13} h={12}><path d="M.5 6V.5H8" stroke="#777" strokeDasharray="1 1" /><circle cx="7.500" cy="6.500" r="4.500" fill="#ccc" stroke="#444" /><path d="M7.500 3v4h4a4 4 0 00-4-4z" fill="#222" /></Svg>
          </button>
          <button aria-label="New sublayer">
            <Svg w={15} h={11}><path d="M0 3.500h5M3 1.500l2 2-2 2" stroke="#222" /><path d="M6.500 1.500h8v9h-8z" fill="#f4f4f4" stroke="#666" /><path d="M14 3v8H8M9 6h3v3" stroke="#111" /></Svg>
          </button>
          <button aria-label="New layer">
            <Svg w={15} h={11}><path d="M2.500 1.500h8v9h-8z" fill="#f4f4f4" stroke="#666" /><path d="M11 3v8H4M5 6h3v3" stroke="#111" /></Svg>
          </button>
          <button aria-label="Delete layer"><Trash /></button>
        </div>
      </footer>
    </section>
  )
}

export default function App() {
  return (
    <div className="flex h-screen flex-col overflow-hidden border border-[#555] bg-[#d6d6d6] px-[3px] pb-[3px] font-['Open_Sans',sans-serif]">
      <MenuBar />
      <div className="flex min-h-0 flex-1 flex-col border border-[#444]">
        <ControlBar />
        <div className="flex min-h-0 flex-1">
          <Toolbar />
          <DocumentArea />
          <aside className="flex w-[307px] shrink-0 flex-col">
            <div className="flex h-3 shrink-0 items-center justify-end border-b border-black bg-linear-to-b from-[#333] to-[#5a5a5a] pr-[3px]"><Chevrons /></div>
            <GradientPanel />
            <PathfinderPanel />
            <LayersPanel />
          </aside>
        </div>
      </div>
    </div>
  )
}
